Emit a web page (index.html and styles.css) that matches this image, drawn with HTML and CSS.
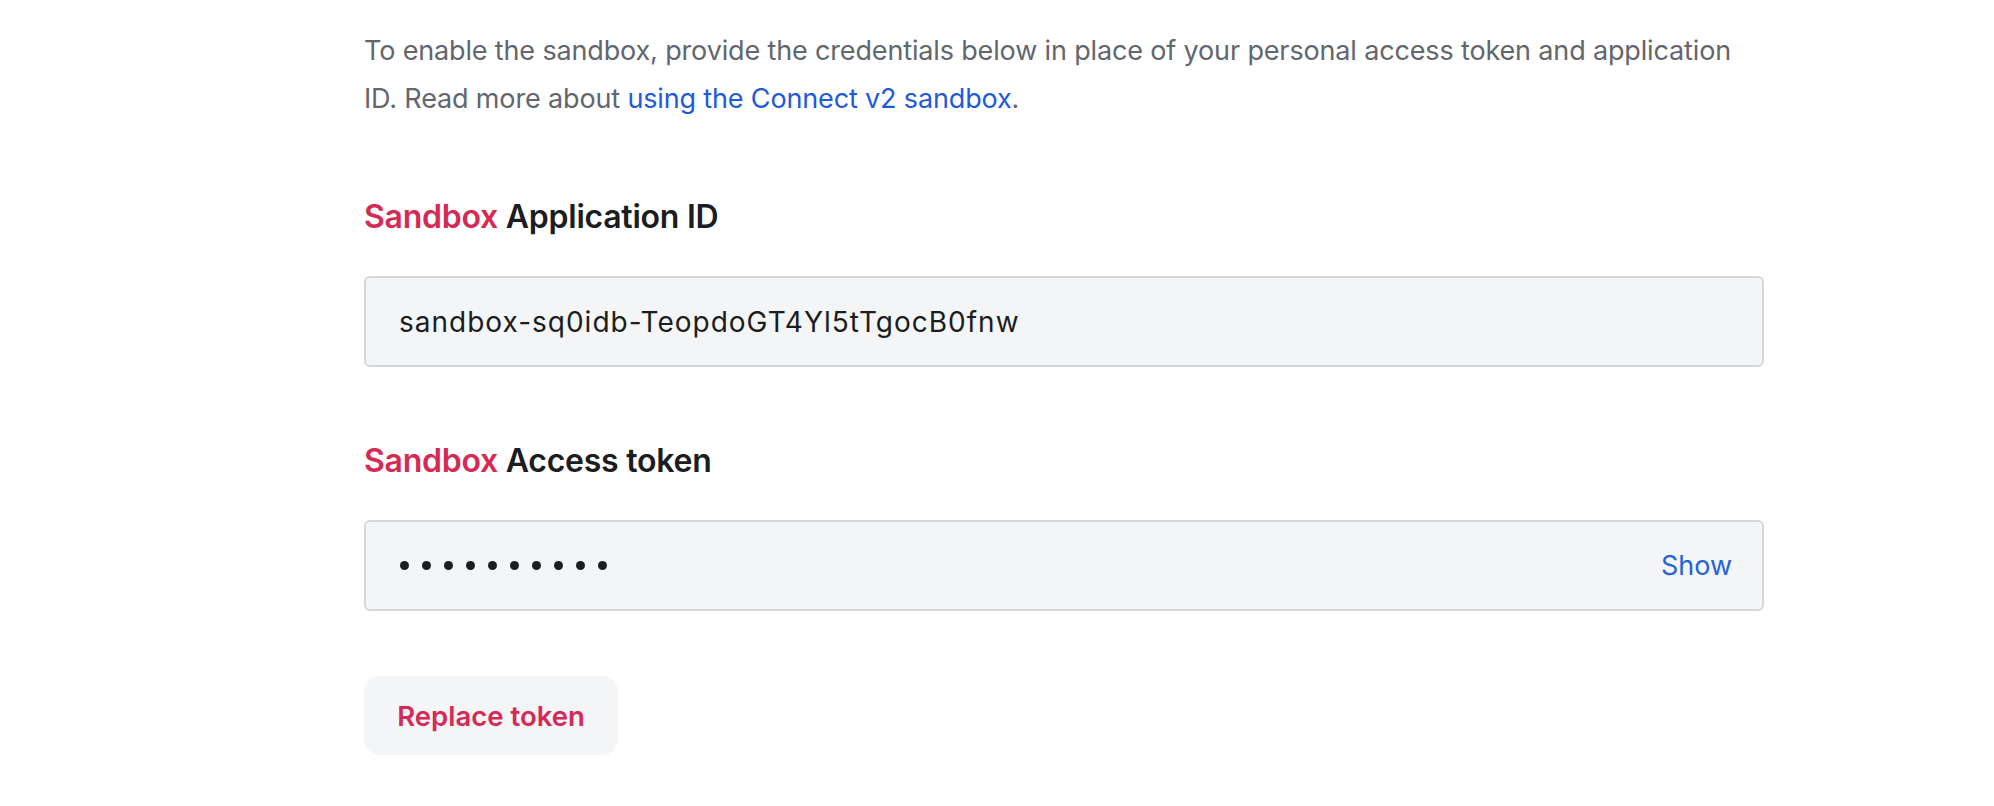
FILE: index.html
```html
<!DOCTYPE html>
<html lang="en">
<head>
<meta charset="utf-8">
<title>Sandbox credentials</title>
<link rel="stylesheet" href="styles.css">
</head>
<body>
<main class="page">
  <p class="intro">To enable the sandbox, provide the credentials below in place of your personal access token and application ID. Read more about <a class="link" href="#">using the Connect v2 sandbox</a>.</p>

  <section class="field">
    <h3 class="label"><span class="env">Sandbox</span> Application ID</h3>
    <div class="input"><span class="value">sandbox-sq0idb-TeopdoGT4Yl5tTgocB0fnw</span></div>
  </section>

  <section class="field">
    <h3 class="label"><span class="env">Sandbox</span> Access token</h3>
    <div class="input">
      <span class="dots"><i></i><i></i><i></i><i></i><i></i><i></i><i></i><i></i><i></i><i></i></span>
      <a class="show" href="#">Show</a>
    </div>
  </section>

  <button class="btn" type="button">Replace token</button>
</main>
</body>
</html>
```

FILE: styles.css
```css
html, body {
  margin: 0;
  padding: 0;
  background: #ffffff;
}

body {
  font-family: Inter, "Noto Sans", "Liberation Sans", sans-serif;
  color: #1b1d21;
}

.page {
  width: 1400px;
  margin-left: 364px;
  padding-top: 27px;
  display: flex;
  flex-direction: column;
  align-items: flex-start;
}

.intro {
  margin: 0;
  font-size: 27px;
  line-height: 48px;
  color: #62666d;
  letter-spacing: -0.15px;
  width: 1400px;
}

.link {
  color: #1f5ad8;
  text-decoration: none;
}

.field {
  width: 100%;
  margin-top: 74px;
}

.label {
  margin: 0;
  font-size: 32px;
  line-height: 40px;
  font-weight: 600;
  letter-spacing: -0.25px;
  color: #1b1d21;
}

.env {
  color: #d52a54;
}

.input {
  margin-top: 39px;
  box-sizing: border-box;
  height: 91px;
  border: 2px solid #d5d7da;
  border-radius: 6px;
  background: #f4f5f7;
  padding: 0 30px 0 33px;
  display: flex;
  align-items: center;
  justify-content: space-between;
}

.value {
  font-size: 28px;
  color: #1b1d21;
  letter-spacing: 1px;
}

.dots {
  display: flex;
  gap: 13px;
  padding-left: 1px;
}

.dots i {
  display: block;
  width: 9px;
  height: 9px;
  border-radius: 50%;
  background: #1b1d21;
}

.show {
  font-size: 27px;
  color: #2562d9;
  text-decoration: none;
}

.btn {
  margin-top: 65px;
  box-sizing: border-box;
  height: 79px;
  width: 254px;
  border: none;
  border-radius: 16px;
  background: #f4f5f7;
  font-family: Inter, "Noto Sans", "Liberation Sans", sans-serif;
  font-size: 27.5px;
  font-weight: 600;
  color: #d52a54;
  padding: 0;
}
```
